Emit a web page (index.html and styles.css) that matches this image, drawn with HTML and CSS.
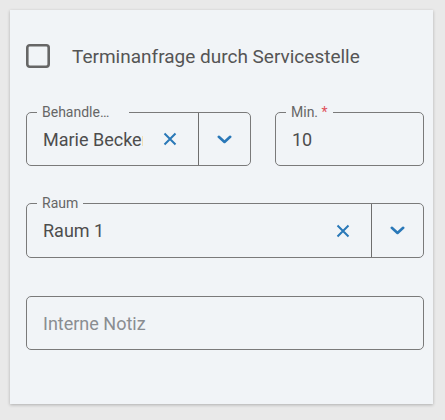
FILE: index.html
```html
<!DOCTYPE html>
<html lang="de">
<head>
<meta charset="utf-8">
<link rel="stylesheet" href="styles.css">
</head>
<body>
<div class="card">
  <label class="check">
    <span class="box"><svg width="24" height="24" viewBox="0 0 24 24"><rect x="1.3" y="1.3" width="21.4" height="21.4" rx="2.4" fill="none" stroke="#666" stroke-width="2.6"/></svg></span>
    <span class="check-text">Terminanfrage durch Servicestelle</span>
  </label>

  <div class="row-split">
    <div class="field field-select">
      <span class="float-label label-wide">Behandle…</span>
      <span class="value value-clip">Marie Becker</span>
      <span class="clear"><svg width="14" height="14" viewBox="0 0 14 14"><path d="M1.5 1.5 L12.5 12.5 M12.5 1.5 L1.5 12.5" stroke="#2a78b8" stroke-width="2" fill="none"/></svg></span>
      <span class="toggle"><svg width="15" height="9" viewBox="0 0 15 9"><path d="M1.8 1.8 L7.5 7 L13.2 1.8" stroke="#2a78b8" stroke-width="2.6" fill="none" stroke-linecap="round" stroke-linejoin="round"/></svg></span>
    </div>
    <div class="field">
      <span class="float-label">Min. <span class="req">*</span></span>
      <span class="value">10</span>
    </div>
  </div>

  <div class="field field-select field-room">
    <span class="float-label">Raum</span>
    <span class="value">Raum 1</span>
    <span class="clear"><svg width="14" height="14" viewBox="0 0 14 14"><path d="M1.5 1.5 L12.5 12.5 M12.5 1.5 L1.5 12.5" stroke="#2a78b8" stroke-width="2" fill="none"/></svg></span>
    <span class="toggle"><svg width="15" height="9" viewBox="0 0 15 9"><path d="M1.8 1.8 L7.5 7 L13.2 1.8" stroke="#2a78b8" stroke-width="2.6" fill="none" stroke-linecap="round" stroke-linejoin="round"/></svg></span>
  </div>

  <div class="field field-note">
    <span class="placeholder">Interne Notiz</span>
  </div>
</div>
</body>
</html>
```
FILE: styles.css
```css
html, body {
  margin: 0;
  padding: 0;
}
body {
  background: #e9e9e9;
  padding: 10px;
  font-family: Roboto, "Liberation Sans", sans-serif;
}
.card {
  width: 423px;
  height: 394px;
  box-sizing: border-box;
  background: #f1f4f7;
  box-shadow: 0 1px 3px rgba(0, 0, 0, 0.25);
  padding: 34px 9px 0 16px;
  display: flex;
  flex-direction: column;
}
.check {
  display: flex;
  align-items: center;
  gap: 22px;
  height: 24px;
}
.box {
  display: block;
  width: 24px;
  height: 24px;
}
.box svg { display: block; }
.check-text {
  font-size: 19px;
  color: #555;
}
.row-split {
  margin-top: 44px;
  display: grid;
  grid-template-columns: 225px 1fr;
  gap: 24px;
  height: 54px;
}
.field {
  position: relative;
  box-sizing: border-box;
  height: 54px;
  border: 1px solid #7a7a7a;
  border-radius: 5px;
  display: flex;
  align-items: center;
  padding-left: 16px;
}
.field-room {
  margin-top: 37px;
  height: 55px;
}
.field-note {
  margin-top: 38px;
}
.float-label {
  position: absolute;
  left: 10px;
  top: -8px;
  padding: 0 5px;
  background: #f1f4f7;
  font-size: 14px;
  line-height: 14px;
  color: #666;
}
.label-wide {
  padding-right: 20px;
}
.req {
  color: #e0505a;
}
.value {
  font-size: 18px;
  color: #4d4d4d;
  flex: 1;
  white-space: nowrap;
  overflow: hidden;
}
.value-clip {
  margin-right: 7px;
}
.placeholder {
  font-size: 18px;
  color: #8a8d91;
}
.clear {
  width: 40px;
  margin-right: 8px;
  display: flex;
  align-items: center;
  justify-content: center;
}
.clear svg, .toggle svg { display: block; }
.toggle {
  width: 52px;
  align-self: stretch;
  box-sizing: border-box;
  border-left: 1px solid #6e6e6e;
  display: flex;
  align-items: center;
  justify-content: center;
}
```
